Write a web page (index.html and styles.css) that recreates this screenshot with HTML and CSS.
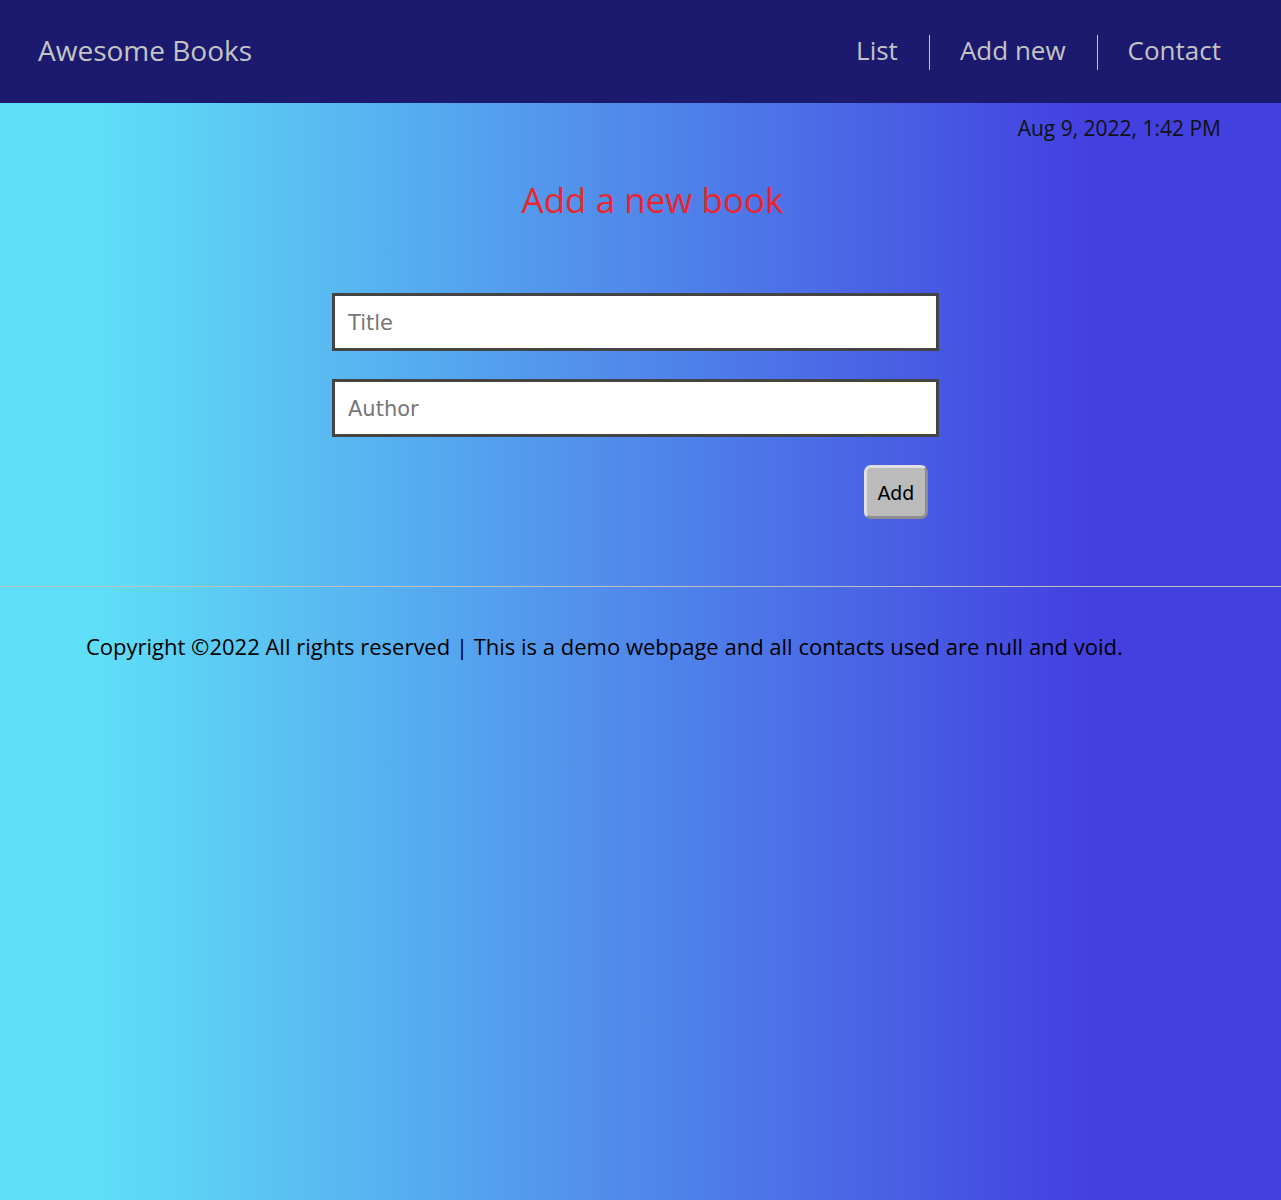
FILE: index.html
```html
<!DOCTYPE html>
<html lang="en">
<head>
<meta charset="utf-8">
<title>Awesome Books</title>
<link rel="stylesheet" href="styles.css">
</head>
<body>
<header class="topbar">
  <a class="brand" href="#">Awesome Books</a>
  <nav>
    <ul class="nav">
      <li><a href="#">List</a></li>
      <li><a href="#">Add new</a></li>
      <li><a href="#">Contact</a></li>
    </ul>
  </nav>
</header>
<main class="content">
  <p class="date">Aug 9, 2022, 1:42 PM</p>
  <h1 class="heading">Add a new book</h1>
  <form class="book-form">
    <input class="field" type="text" placeholder="Title">
    <input class="field" type="text" placeholder="Author">
    <div class="actions"><button class="add-btn" type="button">Add</button></div>
  </form>
</main>
<hr class="rule">
<footer class="footer">
  <p>Copyright &copy;2022 All rights reserved | This is a demo webpage and all contacts used are null and void.</p>
</footer>
</body>
</html>
```

FILE: styles.css
```css
* { box-sizing: border-box; }
html, body { margin: 0; padding: 0; }
body {
  min-height: 1200px;
  font-family: "Open Sans", "DejaVu Sans", sans-serif;
  background: linear-gradient(to right, #5fdef7 0%, #5fdef7 8%, #4340e0 85%, #4340e0 100%);
  color: #111;
}
.topbar {
  height: 103px;
  background: #1b1a6f;
  display: flex;
  align-items: center;
  justify-content: space-between;
  padding: 0 60px 0 38px;
}
.brand {
  color: #c4c4c4;
  text-decoration: none;
  font-size: 28px;
  line-height: 34px;
  margin-top: -4px;
}
.nav {
  list-style: none;
  margin: 0;
  padding: 0;
  display: flex;
  align-items: center;
}
.nav li {
  padding: 0 31px 0 30px;
  line-height: 31px;
  margin-top: 2px;
}
.nav li + li { border-left: 1px solid #c4c4c4; }
.nav li:last-child { padding-right: 0; }
.nav a {
  color: #c4c4c4;
  text-decoration: none;
  font-size: 26px;
}
.content { padding: 0; }
.date {
  margin: 0;
  padding: 13px 60px 0 0;
  text-align: right;
  font-size: 21px;
  line-height: 24px;
}
.heading {
  margin: 38px 0 0;
  padding-left: 24px;
  text-align: center;
  color: #e8262c;
  font-weight: normal;
  font-size: 35px;
  line-height: 44px;
}
.book-form {
  width: 607px;
  margin: 71px 0 0 332px;
  display: flex;
  flex-direction: column;
  gap: 28px;
}
.field {
  height: 58px;
  border: 3px solid #444;
  background: #fff;
  padding: 2px 13px 0;
  font-family: "DejaVu Sans", sans-serif;
  font-size: 21px;
  color: #333;
}
.field::placeholder { color: #777; }
.actions {
  display: flex;
  justify-content: flex-end;
  padding-right: 11px;
}
.add-btn {
  width: 64px;
  height: 54px;
  background: #bbb;
  border: 3px outset #e0e0e0;
  border-radius: 7px;
  font-family: "DejaVu Sans", sans-serif;
  font-size: 19px;
  color: #000;
  padding-top: 3px;
}
.rule {
  margin: 67px 0 0;
  border: 0;
  border-top: 1px solid #c0c0c0;
  height: 0;
}
.footer p {
  margin: 0;
  padding: 45px 0 0 86px;
  font-size: 22px;
  font-weight: 500;
  line-height: 28px;
  color: #000;
}
```
